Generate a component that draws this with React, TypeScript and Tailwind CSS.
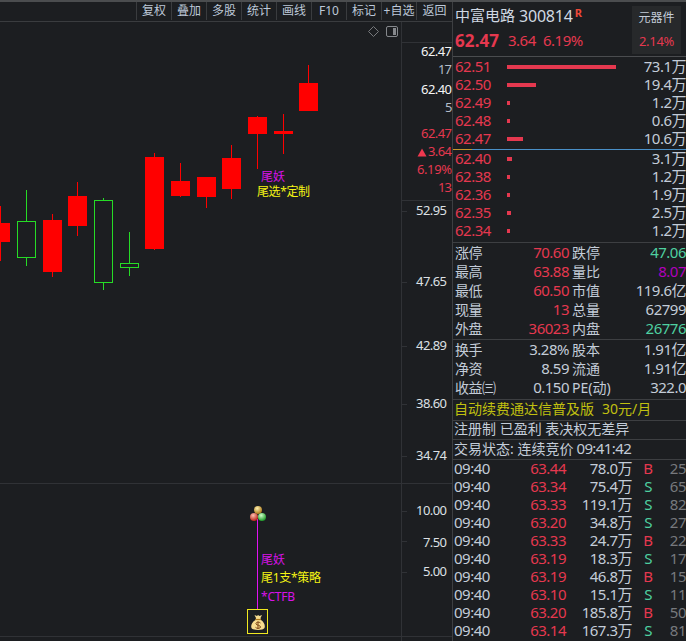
import clsx from "clsx";

const tools = ["复权", "叠加", "多股", "统计", "画线", "F10", "标记", "+自选", "返回"];

const asks = [
  { price: "62.51", bar: 109, vol: "73.1万" },
  { price: "62.50", bar: 29, vol: "19.4万" },
  { price: "62.49", bar: 3, vol: "1.2万" },
  { price: "62.48", bar: 3, vol: "0.6万" },
  { price: "62.47", bar: 16, vol: "10.6万" },
];

const bids = [
  { price: "62.40", bar: 5, vol: "3.1万" },
  { price: "62.38", bar: 3, vol: "1.2万" },
  { price: "62.36", bar: 3, vol: "1.9万" },
  { price: "62.35", bar: 4, vol: "2.5万" },
  { price: "62.34", bar: 3, vol: "1.2万" },
];

const red = "text-[#e5384f]";
const green = "text-[#4fd0a0]";
const light = "text-[#c3ccd8]";

const limits = [
  ["涨停", "70.60", red, "跌停", "47.06", green],
  ["最高", "63.88", red, "量比", "8.07", "text-[#b000bc]"],
  ["最低", "60.50", red, "市值", "119.6亿", light],
  ["现量", "13", red, "总量", "62799", light],
  ["外盘", "36023", red, "内盘", "26776", green],
];

const ratios = [
  ["换手", "3.28%", light, "股本", "1.91亿", light],
  ["净资", "8.59", light, "流通", "1.91亿", light],
  ["收益㈢", "0.150", light, "PE(动)", "322.0", light],
];

const ticks = [
  ["63.44", "78.0万", "B", "25"],
  ["63.34", "75.4万", "S", "65"],
  ["63.33", "119.1万", "S", "82"],
  ["63.20", "34.8万", "S", "27"],
  ["63.33", "24.7万", "B", "22"],
  ["63.19", "18.3万", "S", "17"],
  ["63.19", "46.8万", "B", "15"],
  ["63.10", "15.1万", "S", "11"],
  ["63.20", "185.8万", "B", "50"],
  ["63.14", "167.3万", "S", "81"],
];

// x is the left edge of the body, high/low are the wick ends
const candles = [
  { x: -9, top: 223, bottom: 242, high: 206, low: 261, up: true },
  { x: 17, top: 221, bottom: 258, high: 190, low: 266, up: false },
  { x: 43, top: 220, bottom: 272, high: 214, low: 277, up: true },
  { x: 68, top: 196, bottom: 226, high: 182, low: 236, up: true },
  { x: 94, top: 200, bottom: 283, high: 198, low: 290, up: false },
  { x: 120, top: 263, bottom: 268, high: 232, low: 276, up: false },
  { x: 145, top: 157, bottom: 249, high: 153, low: 250, up: true },
  { x: 171, top: 181, bottom: 196, high: 163, low: 197, up: true },
  { x: 197, top: 177, bottom: 197, high: 177, low: 208, up: true },
  { x: 222, top: 158, bottom: 189, high: 145, low: 199, up: true },
  { x: 248, top: 117, bottom: 134, high: 116, low: 169, up: true },
  { x: 274, top: 131, bottom: 134, high: 114, low: 154, up: true },
  { x: 299, top: 83, bottom: 111, high: 65, low: 111, up: true },
];

const quoteLabels = [
  { x: 421, y: 56, w: 31, text: "62.47", fill: "#f4f4f4" },
  { x: 438, y: 74, w: 14, text: "17", fill: "#b4bdc8" },
  { x: 421, y: 94, w: 31, text: "62.40", fill: "#f4f4f4" },
  { x: 445, y: 112, w: 7, text: "5", fill: "#b4bdc8" },
  { x: 421, y: 138, w: 31, text: "62.47", fill: "#e5384f" },
  { x: 428, y: 156, w: 24, text: "3.64", fill: "#e5384f" },
  { x: 417, y: 174, w: 35, text: "6.19%", fill: "#e5384f" },
  { x: 438, y: 192, w: 14, text: "13", fill: "#e5384f" },
];

const scaleLabels = [
  { x: 416, y: 215, w: 31, text: "52.95" },
  { x: 416, y: 286, w: 31, text: "47.65" },
  { x: 416, y: 350, w: 31, text: "42.89" },
  { x: 416, y: 408, w: 31, text: "38.60" },
  { x: 416, y: 460, w: 31, text: "34.74" },
  { x: 416, y: 515, w: 31, text: "10.00" },
  { x: 423, y: 547, w: 24, text: "7.50" },
  { x: 423, y: 576, w: 24, text: "5.00" },
];

function Candle({ x, top, bottom, high, low, up }: (typeof candles)[number]) {
  const mid = x + 9;
  if (up) {
    return (
      <g fill="#ff0000">
        <rect x={mid} y={high} width="1" height={low - high} />
        <rect x={x} y={top} width="19" height={bottom - top} />
      </g>
    );
  }
  return (
    <g fill="#26dc26">
      <rect x={mid} y={high} width="1" height={top - high} />
      <rect x={mid} y={bottom} width="1" height={low - bottom} />
      <rect
        x={x + 0.5}
        y={top + 0.5}
        width="18"
        height={bottom - top - 1}
        fill="none"
        stroke="#26dc26"
      />
    </g>
  );
}

function Chart() {
  return (
    <svg
      width="452"
      height="619"
      viewBox="0 22 452 619"
      className="block"
      shapeRendering="crispEdges"
    >
      <g fill="#303236">
        <rect x="401" y="22" width="1" height="619" />
        <rect x="402" y="42" width="50" height="1" />
        <rect x="402" y="200" width="50" height="1" />
        <rect x="0" y="483" width="452" height="1" />
        <rect x="0" y="636" width="452" height="1" />
        {[211, 282, 346, 404, 456, 511, 541, 572].map((y) => (
          <rect key={y} x="402" y={y} width="5" height="1" />
        ))}
      </g>

      <g fill="none" stroke="#85888c" shapeRendering="auto">
        <path d="M373.5 26.5 L378.5 31.5 L373.5 36.5 L368.5 31.5 Z" stroke="#77797c" />
        <rect x="386.5" y="26.5" width="11" height="10" rx="1.5" />
        <rect x="393" y="28" width="3" height="7" fill="#85888c" stroke="none" />
      </g>

      {candles.map((c) => (
        <Candle key={c.x} {...c} />
      ))}

      <g fontSize="13">
        {quoteLabels.map((l) => (
          <text key={l.y} x={l.x} y={l.y} textLength={l.w} fill={l.fill}>
            {l.text}
          </text>
        ))}
        {scaleLabels.map((l) => (
          <text key={l.y} x={l.x} y={l.y} textLength={l.w} fill="#dde0e4">
            {l.text}
          </text>
        ))}
      </g>
      <path d="M422 148.5 L426.5 156.5 L417.5 156.5 Z" fill="#f0384f" shapeRendering="auto" />

      <g fontSize="12">
        <text x="261" y="181" fill="#d812e8">尾妖</text>
        <text x="257" y="196" fill="#f5f514" textLength="53">尾选*定制</text>
        <text x="261" y="564" fill="#d812e8">尾妖</text>
        <text x="261" y="582" fill="#f5f514" textLength="60">尾1支*策略</text>
        <text x="261" y="601" fill="#d812e8" textLength="34">*CTFB</text>
      </g>

      <rect x="257" y="519" width="1" height="91" fill="#e012f0" />
      <Balls />
      <MoneyBag />
    </svg>
  );
}

function Balls() {
  return (
    <g shapeRendering="auto">
      <defs>
        <radialGradient id="gold" cx="0.4" cy="0.3" r="0.7">
          <stop offset="0" stopColor="#fff3b0" />
          <stop offset="1" stopColor="#a87414" />
        </radialGradient>
        <radialGradient id="ruby" cx="0.4" cy="0.3" r="0.7">
          <stop offset="0" stopColor="#ffc0b0" />
          <stop offset="1" stopColor="#b42418" />
        </radialGradient>
        <radialGradient id="jade" cx="0.4" cy="0.3" r="0.7">
          <stop offset="0" stopColor="#d0ffc8" />
          <stop offset="1" stopColor="#1c9828" />
        </radialGradient>
      </defs>
      <circle cx="258" cy="510" r="4" fill="url(#gold)" />
      <circle cx="254" cy="517" r="4" fill="url(#ruby)" />
      <circle cx="262" cy="517" r="4" fill="url(#jade)" />
    </g>
  );
}

function MoneyBag() {
  return (
    <g shapeRendering="auto">
      <rect x="247.5" y="609.5" width="20" height="24" fill="#1c1e21" stroke="#f0e820" />
      <path
        d="M254.5 615 L257 616 L258 615 L259.5 616 L262 615 L260.5 618 L261 620 C264 622 265.5 625.5 264.5 628 C263.5 630.5 252.5 630.5 251.5 628 C250.5 625.5 252 622 255.5 620 L256 618 Z"
        fill="#f6dc90"
      />
      <path d="M255.5 619.5 H261" stroke="#b07818" strokeWidth="1.2" />
      <path
        d="M260.5 623 C259 621.5 255.5 622 256 624 C256.5 625.5 260.5 625 260.5 627 C260.5 628.8 256.5 628.8 255.5 627.3 M258 621.5 V629"
        fill="none"
        stroke="#7a4414"
        strokeWidth="1"
      />
    </g>
  );
}

function DepthRow({ price, bar, vol }: (typeof asks)[number]) {
  return (
    <div className="flex h-[18px] items-center pl-0.5">
      <span className={clsx("w-[52px] pb-0.5", red)}>{price}</span>
      <span className="h-1 bg-[#e5384f]" style={{ width: bar }} />
      <span className={clsx("ml-auto pb-0.5", light)}>{vol}</span>
    </div>
  );
}

function StatRow({ row }: { row: string[] }) {
  return (
    <div className="flex h-[19px] items-center pl-0.5">
      <span className={clsx("w-12 text-sm leading-none", light)}>{row[0]}</span>
      <span className={clsx("w-[66px] text-right", row[2])}>{row[1]}</span>
      <span className={clsx("ml-[3px] text-sm leading-none tracking-normal", light)}>{row[3]}</span>
      <span className={clsx("ml-auto", row[5])}>{row[4]}</span>
    </div>
  );
}

function QuotePanel() {
  return (
    <aside className="w-[234px] shrink-0 overflow-hidden border-l border-[#3d3f42] text-[15px] leading-none tracking-[-0.5px] whitespace-nowrap">
      <div className="flex h-[55px] justify-between border-b border-[#4a4c4f] pr-[5px] pl-0.5">
        <div>
          <div className="flex h-[27px] items-center text-[#d0d8e2]">
            <span className="tracking-normal">中富电路</span>
            <span className="ml-1 text-base tracking-[-0.2px]">300814</span>
            <span className="mb-1.5 ml-0.5 text-[11px] font-bold text-[#f04a38]">R</span>
          </div>
          <div className={clsx("flex h-[22px] items-center", red)}>
            <span className="w-[53px] text-[17px] font-bold tracking-[0.1px]">62.47</span>
            <span className="w-[35px]">3.64</span>
            <span>6.19%</span>
          </div>
        </div>
        <div className="mt-1 flex h-12 w-[49px] flex-col items-center bg-[#27292b] text-xs leading-none tracking-normal">
          <span className={clsx("mt-[6px]", light)}>元器件</span>
          <span className={clsx("mt-[11px] text-[13px] leading-none tracking-[-0.3px]", red)}>2.14%</span>
        </div>
      </div>

      <div className="pt-px">
        {asks.map((row) => (
          <DepthRow key={row.price} {...row} />
        ))}
      </div>
      <div className="mt-px flex h-px">
        <div className="w-[19px] bg-[#c8962c]" />
        <div className="flex-1 bg-[#4a90c8]" />
      </div>
      <div className="h-[93px] border-b border-[#3d3f42]">
        {bids.map((row) => (
          <DepthRow key={row.price} {...row} />
        ))}
      </div>

      <div className="h-[97px] border-b border-[#3d3f42]">
        {limits.map((row) => (
          <StatRow key={row[0]} row={row} />
        ))}
      </div>
      <div className="h-[60px] border-b border-[#3d3f42]">
        {ratios.map((row) => (
          <StatRow key={row[0]} row={row} />
        ))}
      </div>

      <div className="flex h-[21px] items-center border-b border-[#3d3f42] pb-0.5 pl-px text-sm leading-none tracking-normal text-[#c0c010]">
        自动续费通达信普及版<span className="ml-2">30元/月</span>
      </div>
      <div className={clsx("flex h-[19px] items-center border-b border-[#3d3f42] pb-0.5 pl-px text-sm leading-none tracking-normal", light)}>
        注册制 已盈利 表决权无差异
      </div>
      <div className={clsx("flex h-5 items-center border-b border-[#3d3f42] pb-0.5 pl-px text-sm leading-none tracking-normal", light)}>
        交易状态: 连续竞价
        <span className="ml-[3px] text-[15px] tracking-[-0.6px]">09:41:42</span>
      </div>

      {ticks.map(([price, vol, side, count], i) => (
        <div key={i} className={clsx("flex h-[18px] items-center pb-0.5 pl-px", light)}>
          <span className="w-12">09:40</span>
          <span className={clsx("w-16 text-right", red)}>{price}</span>
          <span className="w-[66px] text-right">{vol}</span>
          <span className={clsx("ml-2 w-4 text-center", side === "B" ? red : green)}>
            {side}
          </span>
          <span className="ml-auto text-[#77797d]">{count}</span>
        </div>
      ))}
    </aside>
  );
}

export default function App() {
  return (
    <div className="flex h-[641px] w-[686px] overflow-hidden border-t-2 border-[#4b4d4f] bg-[#1c1e21] font-['Noto_Sans','Noto_Sans_CJK_SC',sans-serif]">
      <main className="w-[452px] shrink-0">
        <div className="flex h-5 justify-end border-b border-[#3a3c3f] pb-px text-xs text-[#bcc8d8]">
          {tools.map((name) => (
            <div
              key={name}
              className="flex w-[35px] items-center justify-center overflow-hidden border-l border-[#3a3c3f] leading-none whitespace-nowrap last:w-9"
            >
              {name}
            </div>
          ))}
        </div>
        <Chart />
      </main>
      <QuotePanel />
    </div>
  );
}
